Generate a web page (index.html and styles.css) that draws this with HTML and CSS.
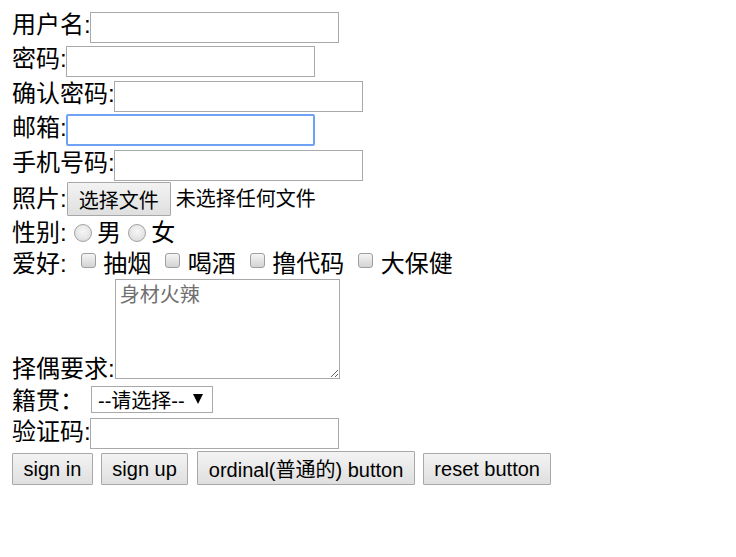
FILE: index.html
```html
<!DOCTYPE html>
<html lang="zh-CN">
<head>
<meta charset="utf-8">
<title>注册</title>
<link rel="stylesheet" href="styles.css">
</head>
<body>
<form class="form">
  <div class="row">
    <span class="lbl">用户名:</span><input class="field" type="text">
  </div>
  <div class="row">
    <span class="lbl">密码:</span><input class="field" type="password">
  </div>
  <div class="row">
    <span class="lbl">确认密码:</span><input class="field" type="password">
  </div>
  <div class="row">
    <span class="lbl">邮箱:</span><input class="field focus" type="text">
  </div>
  <div class="row">
    <span class="lbl">手机号码:</span><input class="field" type="text">
  </div>
  <div class="row row-file">
    <span class="lbl lbl-file">照片:</span><button type="button" class="btn btn-file">选择文件</button><span class="file-text">未选择任何文件</span>
  </div>
  <div class="row row-text">
    <span class="lbl">性别:</span>
    <input class="radio" type="radio" name="sex"><span class="opt">男</span>
    <input class="radio" type="radio" name="sex"><span class="opt">女</span>
  </div>
  <div class="row row-hobby">
    <span class="lbl">爱好:</span>
    <input class="cb" type="checkbox"><span class="opt">抽烟</span>
    <input class="cb" type="checkbox"><span class="opt">喝酒</span>
    <input class="cb" type="checkbox"><span class="opt">撸代码</span>
    <input class="cb" type="checkbox"><span class="opt">大保健</span>
  </div>
  <div class="row row-area">
    <span class="lbl lbl-area">择偶要求:</span><textarea class="area" placeholder="身材火辣"></textarea>
  </div>
  <div class="row row-select">
    <span class="lbl lbl-select">籍贯：</span><span class="select-wrap"><select class="select"><option>--请选择--</option></select></span>
  </div>
  <div class="row row-code">
    <span class="lbl lbl-code">验证码:</span><input class="field field-code" type="text">
  </div>
  <div class="row row-btns">
    <button type="submit" class="btn">sign in</button>
    <button type="button" class="btn">sign up</button>
    <button type="button" class="btn btn-tall">ordinal(普通的) button</button>
    <button type="reset" class="btn">reset button</button>
  </div>
</form>
</body>
</html>
```
FILE: styles.css
```css
html, body {
  margin: 0;
  background: #fff;
}

body {
  font-family: "Liberation Sans", "Noto Sans CJK SC", sans-serif;
  font-size: 24px;
  color: #000;
}

.form {
  padding: 9.5px 0 0 12px;
}

.row {
  display: flex;
  align-items: flex-start;
  height: 34.5px;
}

.lbl {
  line-height: 24px;
  margin-top: 3px;
  white-space: pre;
}

.field {
  box-sizing: border-box;
  width: 249px;
  height: 31px;
  margin: 2px 0 0 -0.5px;
  padding: 0 3px;
  border: 1px solid #a9a9a9;
  background: #fff;
  font: 20px "Liberation Sans", "Noto Sans CJK SC", sans-serif;
  outline: none;
}

.field.focus {
  border: 2px solid #6fa1f4;
  border-radius: 2px;
  margin-top: 1px;
  height: 32px;
}

/* file row */
.row-file {
  height: 36px;
}

.lbl-file {
  margin-top: 5px;
}

.btn {
  box-sizing: border-box;
  height: 32px;
  margin: 0 8px 0 0;
  padding: 0 10.5px;
  border: 1px solid #a8a8a8;
  border-radius: 1px;
  background: linear-gradient(#f3f3f3, #dfdfdf);
  color: #000;
  font: 20px "Liberation Sans", "Noto Sans CJK SC", sans-serif;
  white-space: nowrap;
}

.btn-file {
  height: 34px;
  width: 104px;
  margin: 0;
  padding: 0;
}

.file-text {
  font-size: 20px;
  line-height: 24px;
  margin: 5px 0 0 5px;
}

/* gender / hobby rows */
.row-text {
  height: 30.5px;
}

.row-hobby {
  height: 30.2px;
}

.opt {
  line-height: 24px;
  margin-top: 3px;
}

.radio {
  box-sizing: border-box;
  appearance: none;
  -webkit-appearance: none;
  width: 18px;
  height: 18px;
  margin: 5.5px 5.3px 0 7px;
  border: 1px solid #a2a2a2;
  border-radius: 50%;
  background: radial-gradient(circle at 50% 40%, #f6f6f6 0%, #e6e6e6 55%, #d2d2d2 100%);
}

.cb {
  box-sizing: border-box;
  appearance: none;
  -webkit-appearance: none;
  width: 15px;
  height: 15px;
  margin: 4px 7.5px 0 14px;
  border: 1px solid #9f9f9f;
  border-radius: 3px;
  background: linear-gradient(#f5f5f5, #d3d3d3);
}

/* textarea row */
.row-area {
  height: 104.8px;
}

.lbl-area {
  align-self: flex-end;
  margin: 0 0 2.2px;
}

.area {
  box-sizing: border-box;
  width: 225px;
  height: 100px;
  margin: 0;
  padding: 2.5px 4px;
  border: 1px solid #a9a9a9;
  background: #fff;
  font: 20px/24px "Noto Sans CJK SC", sans-serif;
  outline: none;
}

.area::placeholder {
  color: #707070;
}

/* select row */
.row-select {
  height: 33px;
}

.lbl-select {
  margin-top: 5.5px;
}

.select-wrap {
  position: relative;
  display: block;
  margin: 2.5px 0 0 7px;
}

.select-wrap::after {
  content: "";
  position: absolute;
  left: 102px;
  top: 8px;
  width: 0;
  height: 0;
  border-left: 5.5px solid transparent;
  border-right: 5.5px solid transparent;
  border-top: 10px solid #000;
  pointer-events: none;
}

.select {
  box-sizing: border-box;
  appearance: none;
  -webkit-appearance: none;
  display: block;
  width: 122px;
  height: 27px;
  margin: 0;
  padding: 2px 0 0 6px;
  border: 1px solid #a9a9a9;
  border-radius: 0;
  background: #fff;
  color: #000;
  font: 20px/25px "Liberation Sans", "Noto Sans CJK SC", sans-serif;
}

/* captcha row */
.lbl-code {
  margin-top: 4px;
}

/* buttons row */
.row-btns {
  align-items: flex-end;
}

.btn-tall {
  height: 34px;
  margin-right: 8px;
}

.row-btns .btn:nth-child(2) {
  margin-right: 9px;
}
```
